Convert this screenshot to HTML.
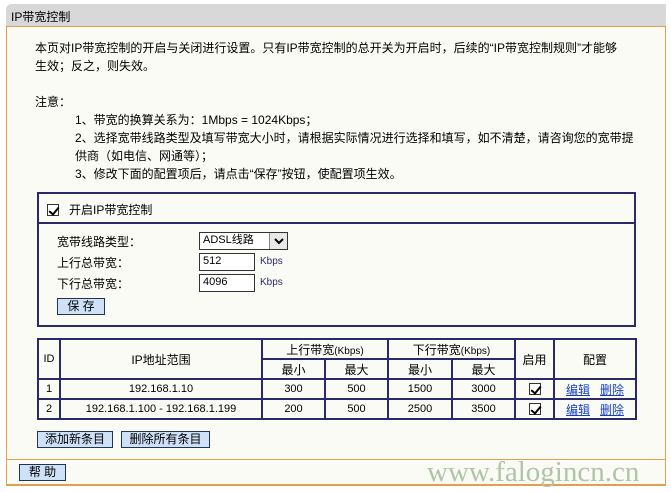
<!DOCTYPE html>
<html><head><meta charset="utf-8"><style>
*{margin:0;padding:0;box-sizing:border-box}
body{width:671px;height:492px;background:#fff;font-family:"Liberation Sans","Noto Sans CJK SC",sans-serif;font-size:12px;color:#000;position:relative;overflow:hidden}
.a{position:absolute;white-space:nowrap}
#box{position:absolute;left:6px;top:4px;width:660px;height:482px;background:#fbfbf6;border-left:1px solid #e0a050;border-right:1px solid #e0a050;border-bottom:2px solid #e0a050;border-top-left-radius:6px}
#hd{position:absolute;left:6px;top:4px;width:660px;height:23px;background:#d8d8d8;border-top-left-radius:6px;border-bottom:1px solid #e0a050}
.btn{position:absolute;background:#cfe1f6;border:1px solid #1f3550;text-align:center;line-height:15px;font-size:12px}
.inp{position:absolute;background:#fff;border:1px solid #333;font-size:11px;padding-left:3px;line-height:15px}
table{position:absolute;left:37px;top:338px;border-collapse:collapse;border:2px solid #2a2a6a;background:#fbfbf6}
td{border:2px solid #2a2a6a;text-align:center;font-size:11px;padding:0;height:20px}
.cb{display:inline-block;width:12px;height:12px;border:1px solid #333;background:#fff;position:relative;vertical-align:middle}
.cb:after{content:"";position:absolute;left:3px;top:0px;width:4px;height:8px;border:solid #000;border-width:0 2px 2px 0;transform:rotate(40deg)}
a{color:#1540c8;text-decoration:underline}
.kb{color:#2a2a6a;font-size:10px}
</style></head><body>
<div id="box"></div>
<div id="hd"></div>
<div class="a" style="left:11px;top:8px;font-size:12px">IP带宽控制</div>
<div class="a" style="left:35px;top:39px;line-height:18px">本页对IP带宽控制的开启与关闭进行设置。只有IP带宽控制的总开关为开启时，后续的“IP带宽控制规则”才能够<br>生效；反之，则失效。</div>
<div class="a" style="left:35px;top:93px">注意：</div>
<div class="a" style="left:75px;top:111px;line-height:18px">1、带宽的换算关系为：1Mbps = 1024Kbps；<br>2、选择宽带线路类型及填写带宽大小时，请根据实际情况进行选择和填写，如不清楚，请咨询您的宽带提<br>供商（如电信、网通等）；<br>3、修改下面的配置项后，请点击“保存”按钮，使配置项生效。</div>

<div class="a" style="left:37px;top:192px;width:599px;height:135px;border:2px solid #2a2a6a"></div>
<div class="a" style="left:37px;top:222px;width:599px;height:2px;background:#2a2a6a"></div>
<div class="a" style="left:47px;top:202px"><span class="cb"></span></div>
<div class="a" style="left:69px;top:201px">开启IP带宽控制</div>
<div class="a" style="left:57px;top:233px">宽带线路类型：</div>
<div class="a" style="left:57px;top:254px">上行总带宽：</div>
<div class="a" style="left:57px;top:275px">下行总带宽：</div>
<div class="inp" style="left:199px;top:232px;width:89px;height:18px">ADSL线路</div>
<div class="a" style="left:269px;top:233px;width:18px;height:16px;background:#e8e8e8;border-left:1px solid #888">
<svg width="18" height="16" viewBox="0 0 18 16"><path d="M5 6 L9 10 L13 6" fill="none" stroke="#000" stroke-width="2"/></svg></div>
<div class="inp" style="left:199px;top:253px;width:56px;height:18px">512</div>
<div class="inp" style="left:199px;top:274px;width:56px;height:18px">4096</div>
<div class="a kb" style="left:260px;top:256px">Kbps</div>
<div class="a kb" style="left:260px;top:277px">Kbps</div>
<div class="btn" style="left:57px;top:298px;width:48px;height:17px">保 存</div>

<table>
<tr><td rowspan="2" style="width:22px">ID</td><td rowspan="2" style="width:202px;font-size:12px">IP地址范围</td><td colspan="2" style="height:19px;font-size:12px">上行带宽<span style="font-size:10px">(Kbps)</span></td><td colspan="2" style="font-size:12px">下行带宽<span style="font-size:10px">(Kbps)</span></td><td rowspan="2" style="width:39px;font-size:12px">启用</td><td rowspan="2" style="width:82px;font-size:12px">配置</td></tr>
<tr><td style="width:63px;height:19px;font-size:12px">最小</td><td style="width:63px;font-size:12px">最大</td><td style="width:64px;font-size:12px">最小</td><td style="width:63px;font-size:12px">最大</td></tr>
<tr><td>1</td><td>192.168.1.10</td><td>300</td><td>500</td><td>1500</td><td>3000</td><td><span class="cb"></span></td><td style="font-size:12px"><a>编辑</a>&nbsp;&nbsp;&nbsp;<a>删除</a></td></tr>
<tr><td>2</td><td>192.168.1.100 - 192.168.1.199</td><td>200</td><td>500</td><td>2500</td><td>3500</td><td><span class="cb"></span></td><td style="font-size:12px"><a>编辑</a>&nbsp;&nbsp;&nbsp;<a>删除</a></td></tr>
</table>

<div class="btn" style="left:37px;top:431px;width:76px;height:17px">添加新条目</div>
<div class="btn" style="left:121px;top:431px;width:89px;height:17px">删除所有条目</div>
<div class="a" style="left:6px;top:459px;width:660px;height:1px;background:#e0a050"></div>
<div class="btn" style="left:19px;top:464px;width:47px;height:17px">帮 助</div>
<div class="a" style="left:427px;top:456px;font-family:'Liberation Serif',serif;font-size:29px;color:#b0c4a8;letter-spacing:0px">www.falogincn.cn</div>
</body></html>
